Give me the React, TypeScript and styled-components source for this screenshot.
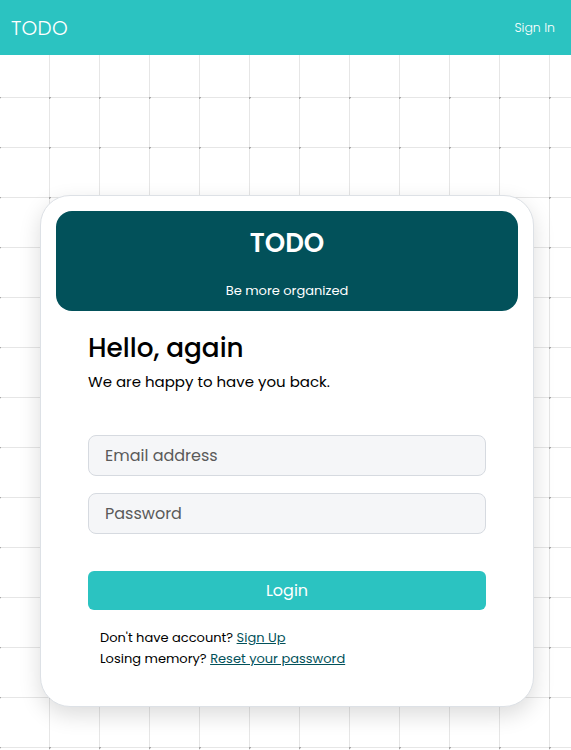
import React from "react";
import styled, { createGlobalStyle } from "styled-components";

const teal = "#2bc3c1";
const deep = "#02515a";
const font = `"Poppins", "Open Sans", "Noto Sans", sans-serif`;

const GlobalStyle = createGlobalStyle`
  html, body {
    margin: 0;
    padding: 0;
    min-height: 100%;
  }
  body {
    font-family: ${font};
    background-color: #ffffff;
    background-image:
      radial-gradient(circle at 0.5px 0.5px, #a8a8a8 0 1.1px, transparent 1.5px),
      linear-gradient(to right, #e6e6e6 0 1px, transparent 1px),
      linear-gradient(to bottom, #e6e6e6 0 1px, transparent 1px);
    background-size: 50px 50px;
    background-position: 49px 47px;
  }
`;

const Page = styled.div`
  min-height: 750px;
  display: flex;
  flex-direction: column;
`;

const TopBar = styled.header`
  height: 55px;
  background: ${teal};
  display: flex;
  align-items: center;
  justify-content: space-between;
  padding: 0 16px 0 11px;
  color: #ffffff;
`;

const Brand = styled.div`
  font-size: 20px;
  font-weight: 300;
  letter-spacing: 0.2px;
`;

const NavLink = styled.a`
  font-size: 12.5px;
  font-weight: 300;
  color: #ffffff;
  text-decoration: none;
  cursor: pointer;
`;

const Main = styled.main`
  display: flex;
  justify-content: flex-start;
  padding: 140px 0 0 40px;
`;

const Card = styled.section`
  width: 494px;
  box-sizing: border-box;
  background: #ffffff;
  border: 1px solid #dde1e6;
  border-radius: 30px;
  padding: 15px 15px 37px;
  box-shadow: 0 8px 22px rgba(0, 0, 0, 0.14);
`;

const Banner = styled.div`
  height: 100px;
  background: ${deep};
  border-radius: 16px;
  color: #ffffff;
  display: flex;
  flex-direction: column;
  align-items: center;
  justify-content: space-between;
  padding: 15px 0 11px;
  box-sizing: border-box;
`;

const BannerTitle = styled.div`
  font-size: 26px;
  font-weight: 600;
  line-height: 34px;
`;

const BannerTag = styled.div`
  font-size: 13px;
  font-weight: 400;
  line-height: 18px;
`;

const Body = styled.div`
  padding: 17px 32px 0;
  display: flex;
  flex-direction: column;
`;

const Title = styled.h1`
  margin: 0;
  font-size: 26.3px;
  font-weight: 500;
  line-height: 39px;
  color: #000000;
`;

const Subtitle = styled.p`
  margin: 4px 0 0;
  font-size: 15px;
  line-height: 22px;
  color: #000000;
`;

const Form = styled.form`
  margin-top: 42px;
  display: flex;
  flex-direction: column;
  gap: 17px;
`;

const Field = styled.input`
  height: 41px;
  box-sizing: border-box;
  border: 1px solid #d6dae0;
  border-radius: 8px;
  background: #f5f6f8;
  padding: 0 16px;
  font-family: ${font};
  font-size: 16px;
  color: #222;
  outline: none;
  &::placeholder {
    color: #5a5a5a;
  }
`;

const Button = styled.button`
  margin-top: 20px;
  height: 39px;
  border: none;
  border-radius: 6px;
  background: ${teal};
  color: #ffffff;
  font-family: ${font};
  font-size: 16px;
  font-weight: 400;
  cursor: pointer;
`;

const Links = styled.div`
  margin-top: 17px;
  padding-left: 12px;
  font-size: 13px;
  line-height: 21px;
  color: #000000;
`;

const Line = styled.div``;

const TextLink = styled.a`
  color: ${deep};
  text-decoration: underline;
  cursor: pointer;
`;

export default function App() {
  return (
    <Page>
      <GlobalStyle />
      <TopBar>
        <Brand>TODO</Brand>
        <NavLink>Sign In</NavLink>
      </TopBar>
      <Main>
        <Card>
          <Banner>
            <BannerTitle>TODO</BannerTitle>
            <BannerTag>Be more organized</BannerTag>
          </Banner>
          <Body>
            <Title>Hello, again</Title>
            <Subtitle>We are happy to have you back.</Subtitle>
            <Form onSubmit={(e) => e.preventDefault()}>
              <Field type="email" placeholder="Email address" />
              <Field type="password" placeholder="Password" />
              <Button type="submit">Login</Button>
            </Form>
            <Links>
              <Line>
                Don't have account? <TextLink>Sign Up</TextLink>
              </Line>
              <Line>
                Losing memory? <TextLink>Reset your password</TextLink>
              </Line>
            </Links>
          </Body>
        </Card>
      </Main>
    </Page>
  );
}
